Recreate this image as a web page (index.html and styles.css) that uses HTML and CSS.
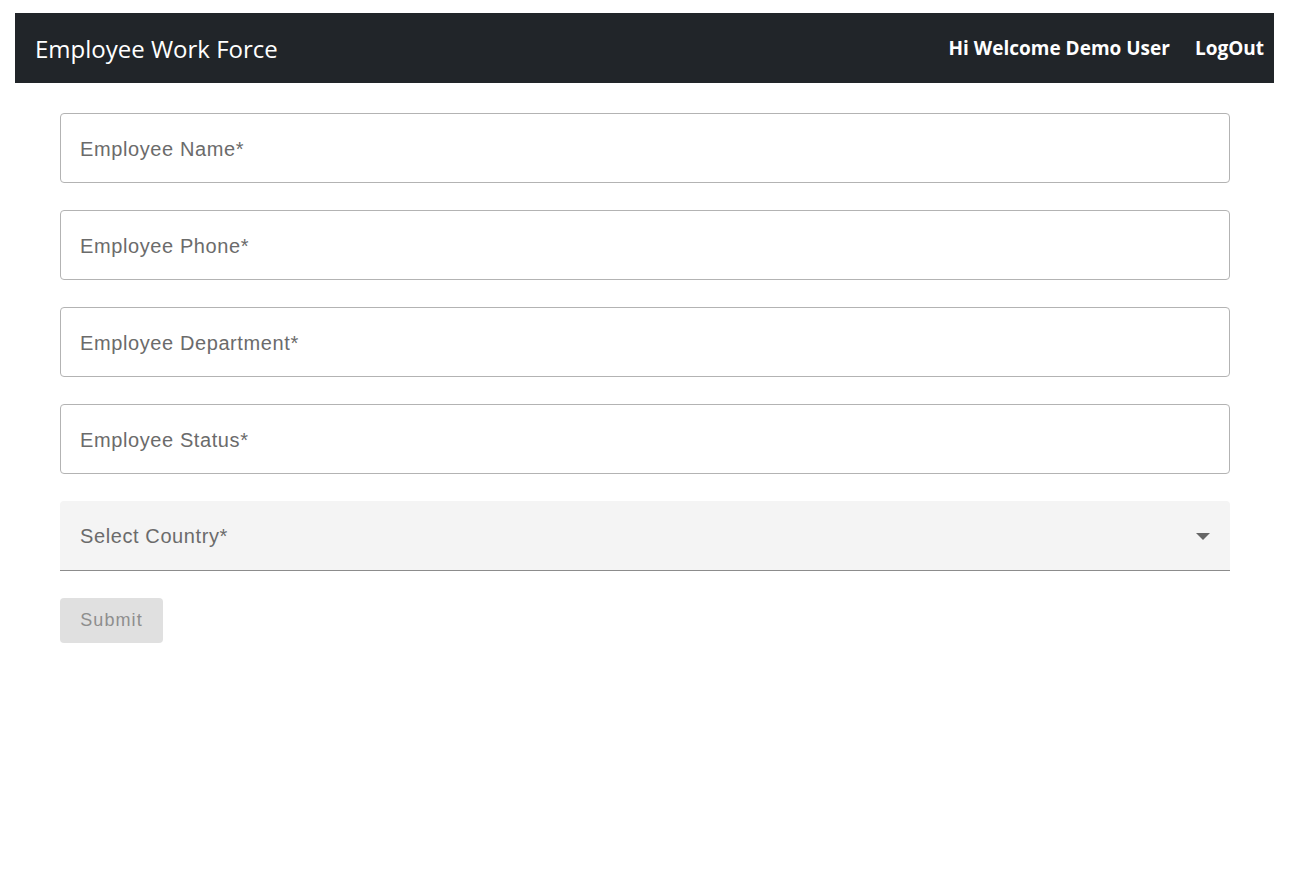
FILE: index.html
```html
<!DOCTYPE html>
<html lang="en">
<head>
<meta charset="utf-8">
<title>Employee Work Force</title>
<link rel="stylesheet" href="styles.css">
</head>
<body>
<nav class="navbar">
  <span class="brand">Employee Work Force</span>
  <div class="nav-right">
    <span class="nav-item">Hi Welcome Demo User</span>
    <span class="nav-item">LogOut</span>
  </div>
</nav>
<form class="form">
  <div class="field"><input class="input" type="text" placeholder="Employee Name*"></div>
  <div class="field"><input class="input" type="text" placeholder="Employee Phone*"></div>
  <div class="field"><input class="input" type="text" placeholder="Employee Department*"></div>
  <div class="field"><input class="input" type="text" placeholder="Employee Status*"></div>
  <div class="select">
    <span class="select-label">Select Country*</span>
    <svg class="arrow" width="14" height="7" viewBox="0 0 14 7"><path d="M0 0 L14 0 L7 7 Z" fill="#666"/></svg>
  </div>
  <div class="actions"><button class="submit" type="button" disabled>Submit</button></div>
</form>
</body>
</html>
```
FILE: styles.css
```css
* { box-sizing: border-box; }
body {
  margin: 13px 15px;
  background: #fff;
  font-family: "Liberation Sans", Arial, sans-serif;
}
.navbar {
  height: 70px;
  background: #212529;
  display: flex;
  align-items: center;
  justify-content: space-between;
  padding: 0 10px 0 20px;
  color: #fff;
}
.brand {
  font-family: "Open Sans", "Noto Sans", sans-serif;
  font-size: 24px;
  letter-spacing: 0;
}
.nav-right {
  display: flex;
  gap: 25px;
}
.nav-item {
  font-family: "Open Sans", "Noto Sans", sans-serif;
  font-weight: 700;
  font-size: 19px;
  letter-spacing: 0;
}
.form {
  padding: 30px 44px 0 45px;
  display: flex;
  flex-direction: column;
  gap: 27px;
}
.field { display: flex; }
.input {
  width: 100%;
  height: 70px;
  border: 1px solid #b3b3b3;
  border-radius: 4px;
  padding: 2px 19px 0;
  font-family: "Liberation Sans", Arial, sans-serif;
  font-size: 20px;
  letter-spacing: 0.6px;
  color: #333;
  outline: none;
}
.input::placeholder { color: #6b6b6b; opacity: 1; }
.select {
  height: 70px;
  background: #f4f4f4;
  border-radius: 4px 4px 0 0;
  border-bottom: 1px solid #8c8c8c;
  display: flex;
  align-items: center;
  justify-content: space-between;
  padding: 2px 20px 0 20px;
}
.select-label {
  font-size: 20px;
  letter-spacing: 0.6px;
  color: #6b6b6b;
}
.arrow { display: block; }
.actions { display: flex; }
.submit {
  width: 103px;
  height: 45px;
  background: #e0e0e0;
  border: none;
  border-radius: 4px;
  font-family: "Liberation Sans", Arial, sans-serif;
  font-size: 18px;
  letter-spacing: 1.1px;
  color: #8e8e8e;
  padding: 0;
}
```
